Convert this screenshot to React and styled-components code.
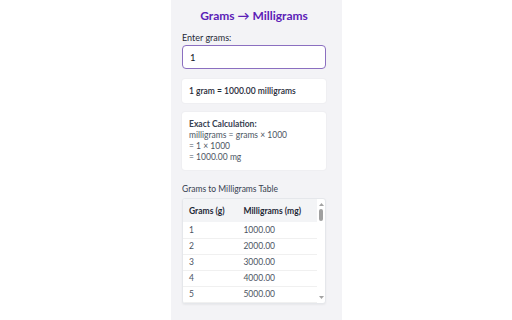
import React, { useState } from 'react';
import styled, { createGlobalStyle } from 'styled-components';

const GlobalStyle = createGlobalStyle`
  html, body {
    margin: 0;
    padding: 0;
    background: #ffffff;
    font-family: Lato, "Open Sans", sans-serif;
  }
`;

const ROWS = Array.from({ length: 50 }, (_, i) => i + 1);

const App = () => {
  const [grams, setGrams] = useState('1');
  const value = parseFloat(grams) || 0;
  const mg = (value * 1000).toFixed(2);

  return (
    <Page>
      <GlobalStyle />
      <Column>
        <Title>Grams → Milligrams</Title>

        <Field>
          <Label htmlFor="grams">Enter grams:</Label>
          <Input
            id="grams"
            value={grams}
            onChange={(e) => setGrams(e.target.value)}
          />
        </Field>

        <ResultCard>
          {value} gram = {mg} milligrams
        </ResultCard>

        <CalcCard>
          <CalcTitle>Exact Calculation:</CalcTitle>
          <CalcLine>milligrams = grams × 1000</CalcLine>
          <CalcLine>= {value} × 1000</CalcLine>
          <CalcLine>= {mg} mg</CalcLine>
        </CalcCard>

        <TableTitle>Grams to Milligrams Table</TableTitle>
        <TableWrap>
          <TableView>
            <Table>
              <thead>
                <tr>
                  <Th>Grams (g)</Th>
                  <Th>Milligrams (mg)</Th>
                </tr>
              </thead>
              <tbody>
                {ROWS.map((g) => (
                  <Row key={g}>
                    <Td>{g}</Td>
                    <Td>{(g * 1000).toFixed(2)}</Td>
                  </Row>
                ))}
              </tbody>
            </Table>
          </TableView>
          <ScrollBar>
            <Arrow viewBox="0 0 10 6">
              <polygon points="5,0 10,6 0,6" />
            </Arrow>
            <Track>
              <Thumb />
            </Track>
            <Arrow viewBox="0 0 10 6">
              <polygon points="0,0 10,0 5,6" />
            </Arrow>
          </ScrollBar>
        </TableWrap>
      </Column>
    </Page>
  );
};

const Page = styled.div`
  display: flex;
  justify-content: center;
  height: 320px;
  overflow: hidden;
`;

const Column = styled.div`
  width: 171px;
  box-sizing: border-box;
  padding: 8px 16px 0 11px;
  margin-left: 1px;
  background: #f3f3f6;
  display: flex;
  flex-direction: column;
`;

const Title = styled.h1`
  margin: 0 0 8px 0;
  text-align: center;
  font-size: 12px;
  font-weight: 700;
  color: #5b21b6;
  line-height: 16px;
`;

const Field = styled.div`
  display: flex;
  flex-direction: column;
`;

const Label = styled.label`
  font-size: 9px;
  color: #1f2937;
  line-height: 12px;
  margin-bottom: 1px;
`;

const Input = styled.input`
  box-sizing: border-box;
  width: 100%;
  height: 24px;
  padding: 0 7px;
  border: 1px solid #8b6fc0;
  border-radius: 4px;
  background: #ffffff;
  font-family: inherit;
  font-size: 9.5px;
  color: #111827;
  outline: none;
`;

const Card = styled.div`
  background: #ffffff;
  border-radius: 3px;
  box-shadow: 0 0 2px rgba(0, 0, 0, 0.07);
  box-sizing: border-box;
`;

const ResultCard = styled(Card)`
  margin-top: 10px;
  height: 24px;
  padding: 0 7px;
  display: flex;
  align-items: center;
  font-size: 8.5px;
  font-weight: 600;
  color: #1f2937;
`;

const CalcCard = styled(Card)`
  margin-top: 9px;
  padding: 7px 7px 7px 7px;
  font-size: 8.5px;
  line-height: 11px;
  color: #4b5563;
`;

const CalcTitle = styled.div`
  font-weight: 700;
  color: #374151;
`;

const CalcLine = styled.div``;

const TableTitle = styled.div`
  margin-top: 13px;
  font-size: 8.5px;
  color: #374151;
  line-height: 12px;
`;

const TableWrap = styled.div`
  margin-top: 3px;
  height: 106px;
  box-sizing: border-box;
  display: flex;
  background: #ffffff;
  border: 1px solid #e5e7eb;
  border-radius: 3px;
  box-shadow: 0 1px 2px rgba(0, 0, 0, 0.05);
  overflow: hidden;
`;

const TableView = styled.div`
  flex: 1;
  overflow: hidden;
`;

const ScrollBar = styled.div`
  width: 8px;
  display: flex;
  flex-direction: column;
  align-items: center;
  padding: 2px 0;
  box-sizing: border-box;
`;

const Arrow = styled.svg`
  width: 5px;
  height: 3px;
  fill: #a3a3a3;
  margin: 2px 0;
`;

const Track = styled.div`
  flex: 1;
  width: 100%;
  display: flex;
  justify-content: center;
  padding-top: 1px;
`;

const Thumb = styled.div`
  width: 4px;
  height: 12px;
  border-radius: 2px;
  background: #a0a0a0;
`;

const Table = styled.table`
  width: 100%;
  border-collapse: collapse;
  font-size: 8.5px;
`;

const Th = styled.th`
  text-align: left;
  font-weight: 700;
  color: #1f2937;
  background: #f3f4f6;
  height: 23px;
  padding: 0 6px;
`;

const Row = styled.tr`
  height: 16px;
`;

const Td = styled.td`
  padding: 0 6px;
  color: #4b5563;
  border-bottom: 1px solid #f0f0f0;
`;

export default App;
